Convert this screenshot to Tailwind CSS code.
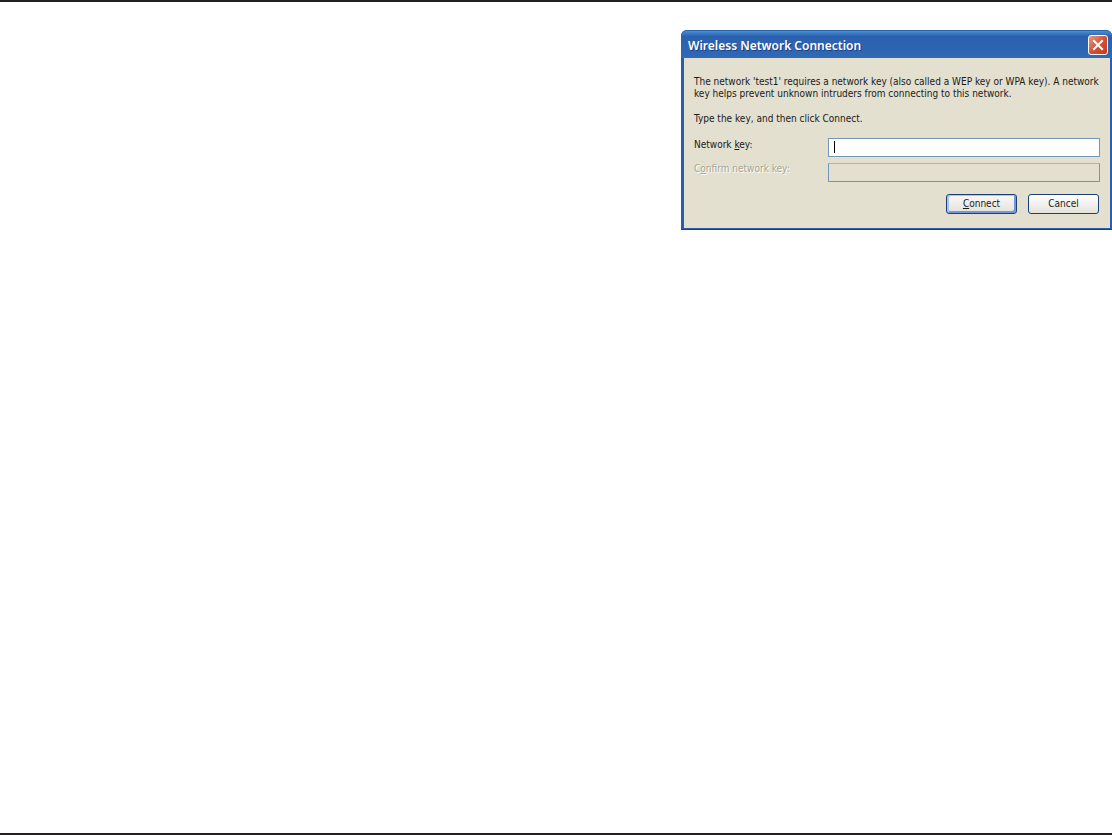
<!DOCTYPE html>
<html lang="en">
<head>
    <meta charset="UTF-8">
    <meta name="viewport" content="width=device-width, initial-scale=1.0">
    <title>Wireless Network Connection</title>
    <script src="https://cdn.jsdelivr.net/npm/@tailwindcss/browser@4"></script>
</head>
<body class="min-h-screen bg-white border-y-2 border-[#231f20] pt-7 flex justify-end items-start font-['DejaVu_Sans_Condensed','DejaVu_Sans',sans-serif] text-[10px] leading-3 text-[#1a1a1a]">
    <main class="w-[431px] rounded-t-md bg-[#2a5db0] border-b border-[#1c3f8c]">
        <header class="h-7 pl-[7px] pr-1 flex items-center justify-between rounded-t-md border-t border-[#2a66b0] bg-linear-to-b from-[#4a8fd0] via-[#2b60ae] via-20% to-[#3069b5]">
            <h1 class="pt-0.5 font-['Noto_Sans',sans-serif] text-xs font-semibold text-white whitespace-nowrap [text-shadow:1px_1px_0_#1b3f85]">Wireless Network Connection</h1>
            <button type="button" aria-label="Close" class="size-5 rounded-[3px] border border-white bg-linear-to-br from-[#e39a88] via-[#d5503a] to-[#c03c1c] flex items-center justify-center">
                <svg class="size-4" viewBox="0 0 16 16" fill="none" stroke="white" stroke-width="2" stroke-linecap="square">
                    <path d="M4 4l8 8M12 4l-8 8" />
                </svg>
            </button>
        </header>

        <form class="ml-[3px] mr-0.5 mb-px h-[170px] bg-[#e3e0cf] pl-2.5 pr-2.5 pt-[18px]">
            <p class="whitespace-nowrap">The network 'test1' requires a network key (also called a WEP key or WPA key). A network<br>key helps prevent unknown intruders from connecting to this network.</p>
            <p class="mt-[13px]">Type the key, and then click Connect.</p>

            <div class="mt-[13px] flex items-start">
                <label for="key" class="w-[134px] pt-px">Network <u>k</u>ey:</label>
                <div class="relative flex-1">
                    <input id="key" type="text" class="block w-full h-[19px] px-1 bg-white border border-[#7396b9] outline-none">
                    <span class="absolute left-1.5 top-[3px] w-px h-3 bg-black"></span>
                </div>
            </div>
            <div class="mt-1.5 flex items-start">
                <label for="confirm" class="w-[134px] text-[#a7a594] [text-shadow:1px_1px_0_#fff]">C<u>o</u>nfirm network key:</label>
                <input id="confirm" type="text" disabled class="block flex-1 h-[19px] px-1 bg-[#e3e0cf] border border-[#7396b9] border-t-[#a9b7bd]">
            </div>

            <div class="mt-3 mr-px flex justify-end gap-[11px]">
                <button type="button" class="w-[71px] h-5 rounded-[3px] border border-[#1c3f78] bg-linear-to-b from-[#f8f8f6] to-[#e4e2dc] shadow-[inset_2px_1px_0_#a9c5ee,inset_-2px_-2px_0_#7397d8]"><u>C</u>onnect</button>
                <button type="button" class="w-[71px] h-5 rounded-[3px] border border-[#1c3f78] bg-linear-to-b from-white to-[#e4e2dc]">Cancel</button>
            </div>
        </form>
    </main>
</body>
</html>
